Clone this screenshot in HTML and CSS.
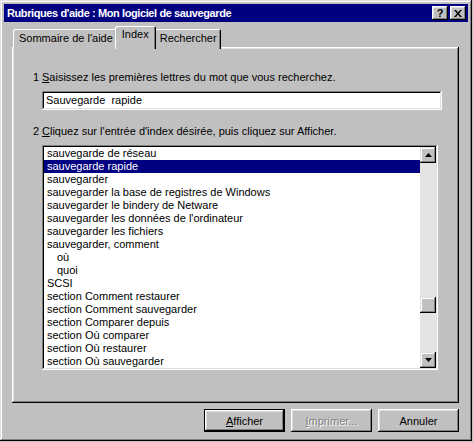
FILE: index.html
```html
<!DOCTYPE html>
<html lang="fr">
<head>
<meta charset="utf-8">
<title>Rubriques d'aide</title>
<link rel="stylesheet" href="styles.css">
</head>
<body>
<div class="window">
  <div class="titlebar">
    <span class="title">Rubriques d'aide : Mon logiciel de sauvegarde</span>
    <div class="title-buttons">
      <span class="tbtn">?</span>
      <span class="tbtn close">
        <svg width="8" height="7" viewBox="0 0 8 7"><path d="M0 0h2l2 2.5L6 0h2L5 3.5 8 7H6L4 4.5 2 7H0l3-3.5z" fill="#000"/></svg>
      </span>
    </div>
  </div>
  <div class="content">
    <div class="tabs">
      <span class="tab">Sommaire de l'aide</span>
      <span class="tab active">Index</span>
      <span class="tab">Rechercher</span>
    </div>
    <div class="panel">
      <div class="label"><span class="num">1</span><span><u>S</u>aisissez les premières lettres du mot que vous recherchez.</span></div>
      <div class="field">Sauvegarde  rapide</div>
      <div class="label second"><span class="num">2</span><span><u>C</u>liquez sur l'entrée d'index désirée, puis cliquez sur Afficher.</span></div>
      <div class="listbox">
        <ul class="items">
          <li>sauvegarde de réseau</li>
          <li class="sel">sauvegarde rapide</li>
          <li>sauvegarder</li>
          <li>sauvegarder la base de registres de Windows</li>
          <li>sauvegarder le bindery de Netware</li>
          <li>sauvegarder les données de l'ordinateur</li>
          <li>sauvegarder les fichiers</li>
          <li>sauvegarder, comment</li>
          <li class="sub">où</li>
          <li class="sub">quoi</li>
          <li>SCSI</li>
          <li>section Comment restaurer</li>
          <li>section Comment sauvegarder</li>
          <li>section Comparer depuis</li>
          <li>section Où comparer</li>
          <li>section Où restaurer</li>
          <li>section Où sauvegarder</li>
        </ul>
        <div class="scrollbar">
          <span class="sbtn"><svg width="7" height="4" viewBox="0 0 7 4"><path d="M3.5 0L7 4H0z" fill="#000"/></svg></span>
          <div class="track upper"></div>
          <span class="thumb"></span>
          <div class="track lower"></div>
          <span class="sbtn"><svg width="7" height="4" viewBox="0 0 7 4"><path d="M0 0h7L3.5 4z" fill="#000"/></svg></span>
        </div>
      </div>
    </div>
    <div class="buttons">
      <span class="btn default"><span><u>A</u>fficher</span></span>
      <span class="btn disabled"><span><u>I</u>mprimer...</span></span>
      <span class="btn">Annuler</span>
    </div>
  </div>
</div>
</body>
</html>
```

FILE: styles.css
```css
* { box-sizing: border-box; }
html, body { margin: 0; padding: 0; }
body {
  width: 473px;
  height: 442px;
  background: #c0c0c0;
  font-family: "Liberation Sans", Arial, sans-serif;
  font-size: 11px;
  color: #000;
  overflow: hidden;
}
.window {
  width: 472px;
  height: 441px;
  background: #c0c0c0;
  padding: 4px;
  box-shadow: inset -1px -1px #000, inset 1px 1px #dfdfdf, inset -2px -2px #808080, inset 2px 2px #fff;
  display: flex;
  flex-direction: column;
}
.titlebar {
  height: 18px;
  background: #000080;
  color: #fff;
  display: flex;
  align-items: center;
  justify-content: space-between;
  padding: 0 2px 0 3px;
}
.title { font-weight: bold; font-size: 11px; letter-spacing: -0.4px; }
.title-buttons { display: flex; gap: 2px; }
.tbtn {
  width: 16px;
  height: 14px;
  background: #c0c0c0;
  color: #000;
  font-weight: bold;
  font-size: 11px;
  display: flex;
  align-items: center;
  justify-content: center;
  box-shadow: inset -1px -1px #000, inset 1px 1px #fff, inset -2px -2px #808080, inset 2px 2px #dfdfdf;
}
.content {
  flex: 1;
  padding: 6px 9px 0 8px;
  display: flex;
  flex-direction: column;
}
.tabs {
  display: flex;
  align-items: flex-end;
  height: 21px;
  padding-left: 1px;
  margin-bottom: -2px;
  position: relative;
  z-index: 1;
}
.tab {
  height: 20px;
  padding: 3px 4px 0 6px;
  background: #c0c0c0;
  box-shadow: inset 1px 1px #fff, inset -1px 0 #000, inset -2px 0 #808080;
  border-radius: 2px 2px 0 0;
  white-space: nowrap;
}
.tab.active {
  height: 23px;
  padding: 2px 7px 0 7px;
  margin: 0 -2px;
  position: relative;
  z-index: 2;
}
.panel {
  height: 356px;
  padding: 24px 17px 0 30px;
  box-shadow: inset -1px -1px #000, inset 1px 1px #fff, inset -2px -2px #808080, inset 2px 2px #dfdfdf;
  display: flex;
  flex-direction: column;
}
.label { display: flex; height: 13px; line-height: 13px; white-space: nowrap; }
.num { width: 9px; margin-left: -9px; }
.label.second { margin-top: 15px; }
.field {
  margin-top: 7px;
  height: 19px;
  line-height: 19px;
  padding-left: 4px;
  background: #fff;
  white-space: pre;
  box-shadow: inset -1px -1px #fff, inset 1px 1px #808080, inset -2px -2px #dfdfdf, inset 2px 2px #000;
}
.listbox {
  margin-top: 7px;
  margin-right: 4px;
  height: 225px;
  background: #fff;
  padding: 2px;
  display: flex;
  box-shadow: inset -1px -1px #fff, inset 1px 1px #808080, inset -2px -2px #dfdfdf, inset 2px 2px #000;
}
.items {
  list-style: none;
  margin: 0;
  padding: 0;
  flex: 1;
  overflow: hidden;
}
.items li { height: 13px; line-height: 13px; padding-left: 3px; white-space: nowrap; }
.items li.sel { background: #000080; color: #fff; }
.items li.sub { padding-left: 13px; }
.scrollbar {
  width: 16px;
  display: flex;
  flex-direction: column;
}
.sbtn, .thumb {
  height: 16px;
  background: #c0c0c0;
  display: flex;
  align-items: center;
  justify-content: center;
  box-shadow: inset -1px -1px #000, inset 1px 1px #dfdfdf, inset -2px -2px #808080, inset 2px 2px #fff;
}
.track { background: #e3e3e3; }
.track.upper { height: 134px; }
.track.lower { flex: 1; }
.buttons {
  margin-top: 6px;
  display: flex;
  justify-content: flex-end;
  gap: 6px;
}
.btn {
  width: 81px;
  height: 23px;
  display: flex;
  align-items: center;
  justify-content: center;
  background: #c0c0c0;
  box-shadow: inset -1px -1px #000, inset 1px 1px #fff, inset -2px -2px #808080, inset 2px 2px #dfdfdf;
}
.btn.default {
  box-shadow: inset 0 0 0 1px #000, inset -2px -2px #000, inset 2px 2px #fff, inset -3px -3px #808080, inset 3px 3px #dfdfdf;
}
.btn.disabled { color: #808080; text-shadow: 1px 1px #fff; }
```
